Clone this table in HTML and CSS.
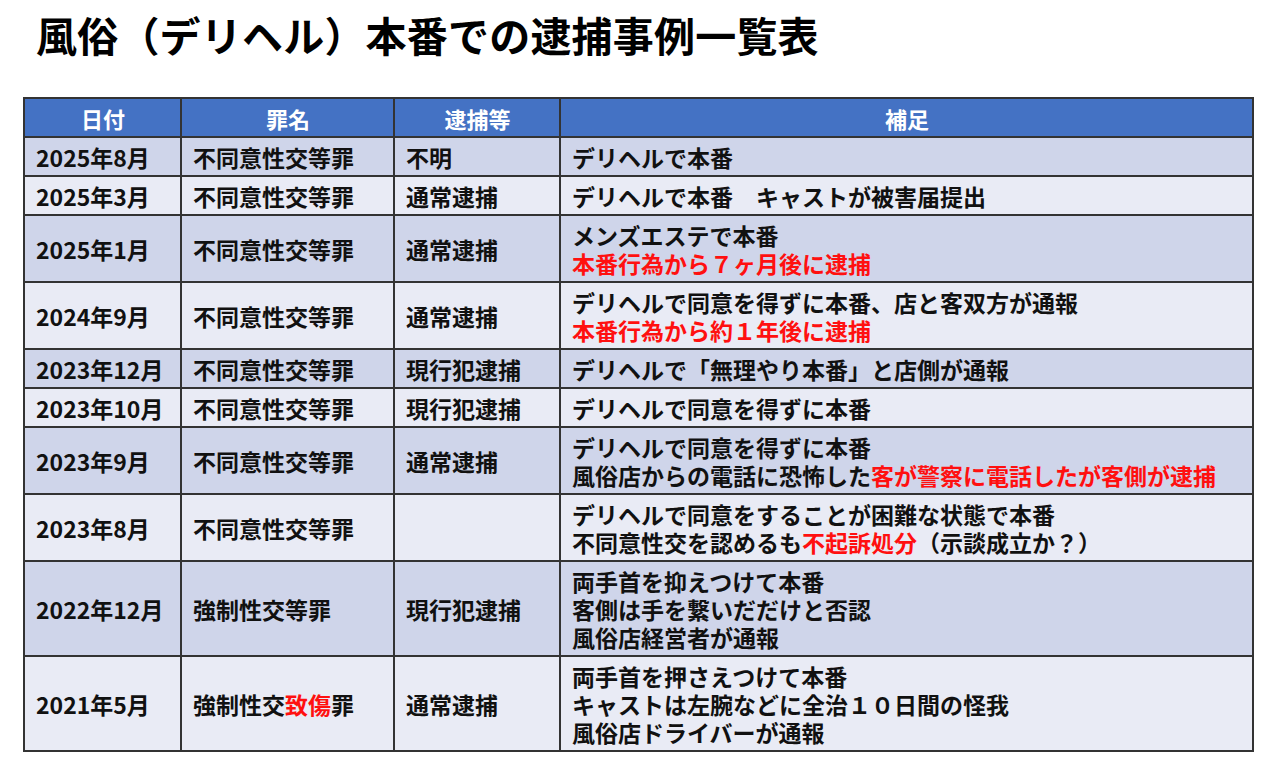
FILE: index.html
```html
<!DOCTYPE html>
<html lang="ja">
<head>
<meta charset="utf-8">
<title>風俗（デリヘル）本番での逮捕事例一覧表</title>
<link rel="stylesheet" href="styles.css">
</head>
<body>
<h1 class="title">風俗（デリヘル）本番での逮捕事例一覧表</h1>
<table class="cases">
  <colgroup>
    <col class="c-date"><col class="c-crime"><col class="c-arrest"><col class="c-note">
  </colgroup>
  <thead>
    <tr><th>日付</th><th>罪名</th><th>逮捕等</th><th>補足</th></tr>
  </thead>
  <tbody>
    <tr class="odd"><td>2025年8月</td><td>不同意性交等罪</td><td>不明</td><td>デリヘルで本番</td></tr>
    <tr class="even"><td>2025年3月</td><td>不同意性交等罪</td><td>通常逮捕</td><td>デリヘルで本番　キャストが被害届提出</td></tr>
    <tr class="odd"><td>2025年1月</td><td>不同意性交等罪</td><td>通常逮捕</td><td>メンズエステで本番<br><span class="red">本番行為から７ヶ月後に逮捕</span></td></tr>
    <tr class="even"><td>2024年9月</td><td>不同意性交等罪</td><td>通常逮捕</td><td>デリヘルで同意を得ずに本番、店と客双方が通報<br><span class="red">本番行為から約１年後に逮捕</span></td></tr>
    <tr class="odd"><td>2023年12月</td><td>不同意性交等罪</td><td>現行犯逮捕</td><td>デリヘルで「無理やり本番」と店側が通報</td></tr>
    <tr class="even"><td>2023年10月</td><td>不同意性交等罪</td><td>現行犯逮捕</td><td>デリヘルで同意を得ずに本番</td></tr>
    <tr class="odd"><td>2023年9月</td><td>不同意性交等罪</td><td>通常逮捕</td><td>デリヘルで同意を得ずに本番<br>風俗店からの電話に恐怖した<span class="red">客が警察に電話したが客側が逮捕</span></td></tr>
    <tr class="even"><td>2023年8月</td><td>不同意性交等罪</td><td></td><td>デリヘルで同意をすることが困難な状態で本番<br>不同意性交を認めるも<span class="red">不起訴処分</span>（示談成立か？）</td></tr>
    <tr class="odd"><td>2022年12月</td><td>強制性交等罪</td><td>現行犯逮捕</td><td>両手首を抑えつけて本番<br>客側は手を繋いだだけと否認<br>風俗店経営者が通報</td></tr>
    <tr class="even"><td>2021年5月</td><td>強制性交<span class="red">致傷</span>罪</td><td>通常逮捕</td><td>両手首を押さえつけて本番<br>キャストは左腕などに全治１０日間の怪我<br>風俗店ドライバーが通報</td></tr>
  </tbody>
</table>
</body>
</html>
```
FILE: styles.css
```css
html, body {
  margin: 0;
  padding: 0;
  background: #ffffff;
}
body {
  font-family: "Noto Sans CJK JP", "Noto Sans", sans-serif;
  color: #111;
}
.title {
  margin: 0;
  padding: 8px 0 0 36px;
  height: 88px;
  box-sizing: border-box;
  font-size: 41px;
  line-height: 52px;
  font-weight: 700;
  color: #000;
  letter-spacing: 0.2px;
}
.cases {
  margin-left: 23px;
  width: 1229px;
  border-collapse: collapse;
  table-layout: fixed;
  margin-top: 9px;
}
.c-date { width: 157px; }
.c-crime { width: 213px; }
.c-arrest { width: 166px; }
.c-note { width: 693px; }
.cases th, .cases td {
  border: 2px solid #333;
  padding: 5px 10px 4px 11px;
  line-height: 28px;
  font-size: 23px;
  font-weight: 700;
  vertical-align: middle;
  white-space: nowrap;
  overflow: hidden;
}
.cases th {
  background: #4472c4;
  color: #fff;
  text-align: center;
  font-size: 22px;
}
.cases td {
  text-align: left;
  color: #111;
}
.odd td { background: #cfd5ea; }
.even td { background: #e9ebf5; }
.red { color: #ff1010; }
```
